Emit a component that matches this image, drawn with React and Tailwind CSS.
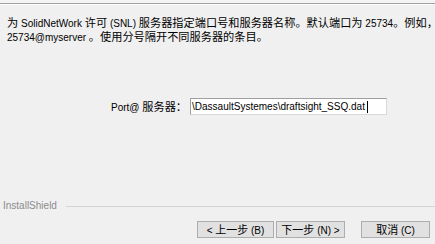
import React from 'react';

function L({ children }) {
  return <span className="font-['Liberation_Sans'] text-[10px]">{children}</span>;
}

function Btn({ children, className = '' }) {
  return (
    <button
      type="button"
      className={`h-[17px] flex items-center justify-center bg-[#e1e1e1] border border-[#adadad] text-[11px] leading-none text-black whitespace-pre ${className}`}
    >
      <span>{children}</span>
    </button>
  );
}

export default function App() {
  return (
    <div className="w-[435px] h-[244px] bg-[#f0f0f0] flex flex-col overflow-hidden font-['Noto_Sans_CJK_SC',sans-serif] text-black">
      <div className="h-[3px] bg-[#f4f4f4]" />
      <div className="h-px bg-[#a0a0a0]" />
      <div className="h-px bg-white" />

      <p className="mt-[11px] ml-[7px] text-[11.2px] leading-[12px] whitespace-nowrap">
        为<L> SolidNetWork </L>许可<L> (SNL) </L>服务器指定端口号和服务器名称。默认端口为<L> 25734</L>。例如，
        <br />
        <L>25734@myserver </L>。使用分号隔开不同服务器的条目。
      </p>

      <div className="mt-[54px] ml-[111px] flex items-center">
        <span className="text-[11.2px] leading-none whitespace-pre">
          <L>Port@ </L>服务器：
        </span>
        <div className="ml-[3px] w-[197px] h-[17px] bg-white border border-[#d9d9d9] border-t-[#a0a0a0] border-l-[#a0a0a0] flex items-center pl-[1px]">
          <span className="font-['Liberation_Sans'] text-[10px] leading-none">
            \DassaultSystemes\draftsight_SSQ.dat
          </span>
          <span className="ml-[2px] w-px h-[12px] bg-black" />
        </div>
      </div>

      <div className="mt-auto flex items-center h-[12px] pl-[3px]">
        <span className="font-['Liberation_Sans'] text-[10px] leading-none text-[#8c8c8c]">InstallShield</span>
        <div className="ml-[9px] flex-1 h-px bg-[#d4d4d4]" />
      </div>

      <div className="mt-[9px] mb-[6px] flex">
        <Btn className="ml-[197px] w-[77px]">
          <L>&lt; </L>上一步<L> (B)</L>
        </Btn>
        <Btn className="ml-[2px] w-[69px]">
          下一步<L> (N) &gt;</L>
        </Btn>
        <Btn className="ml-[16px] w-[69px]">
          取消<L> (C)</L>
        </Btn>
      </div>
    </div>
  );
}
